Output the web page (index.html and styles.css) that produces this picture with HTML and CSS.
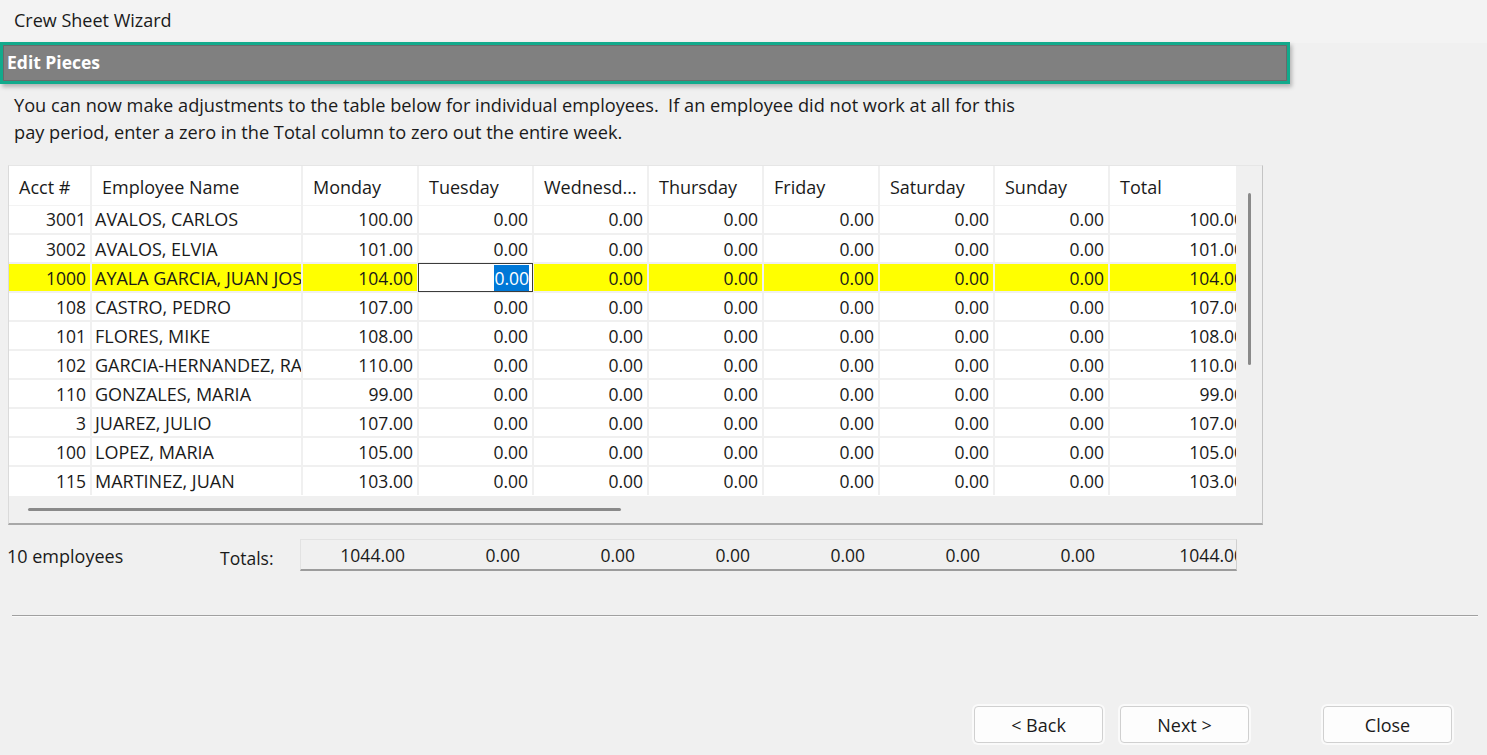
FILE: index.html
```html
<!DOCTYPE html>
<html lang="en">

<head>
    <meta charset="utf-8">
    <title>Crew Sheet Wizard</title>
    <meta name="viewport" content="width=device-width, initial-scale=1.0">
    <link rel="stylesheet" href="styles.css">
</head>

<body>
    <!-- Barre de titre -->
    <header class="barre-titre">Crew Sheet Wizard</header>

    <!-- Bandeau de l'étape -->
    <div class="bandeau">Edit Pieces</div>

    <p class="consigne">
        You can now make adjustments to the table below for individual employees.&nbsp; If an employee did not work at all for this<br>
        pay period, enter a zero in the Total column to zero out the entire week.
    </p>

    <!-- Grille des employés -->
    <section class="grille">
        <div class="zone-table">
            <table class="table-pieces">
                <colgroup>
                    <col class="col-acct">
                    <col class="col-nom">
                    <col class="col-lundi">
                    <col class="col-jour">
                    <col class="col-jour">
                    <col class="col-jour">
                    <col class="col-lundi">
                    <col class="col-jour">
                    <col class="col-jour">
                    <col class="col-total">
                </colgroup>
                <thead>
                    <tr>
                        <th>Acct #</th>
                        <th>Employee Name</th>
                        <th>Monday</th>
                        <th>Tuesday</th>
                        <th>Wednesd...</th>
                        <th>Thursday</th>
                        <th>Friday</th>
                        <th>Saturday</th>
                        <th>Sunday</th>
                        <th>Total</th>
                    </tr>
                </thead>
                <tbody>
                    <tr>
                        <td>3001</td><td class="nom">AVALOS, CARLOS</td>
                        <td>100.00</td><td>0.00</td><td>0.00</td><td>0.00</td><td>0.00</td><td>0.00</td><td>0.00</td><td>100.00</td>
                    </tr>
                    <tr>
                        <td>3002</td><td class="nom">AVALOS, ELVIA</td>
                        <td>101.00</td><td>0.00</td><td>0.00</td><td>0.00</td><td>0.00</td><td>0.00</td><td>0.00</td><td>101.00</td>
                    </tr>
                    <tr class="ligne-active">
                        <td>1000</td><td class="nom">AYALA GARCIA, JUAN JOSE</td>
                        <td>104.00</td>
                        <td class="cellule-edition"><span class="selection">0.00</span></td>
                        <td>0.00</td><td>0.00</td><td>0.00</td><td>0.00</td><td>0.00</td><td>104.00</td>
                    </tr>
                    <tr>
                        <td>108</td><td class="nom">CASTRO, PEDRO</td>
                        <td>107.00</td><td>0.00</td><td>0.00</td><td>0.00</td><td>0.00</td><td>0.00</td><td>0.00</td><td>107.00</td>
                    </tr>
                    <tr>
                        <td>101</td><td class="nom">FLORES, MIKE</td>
                        <td>108.00</td><td>0.00</td><td>0.00</td><td>0.00</td><td>0.00</td><td>0.00</td><td>0.00</td><td>108.00</td>
                    </tr>
                    <tr>
                        <td>102</td><td class="nom">GARCIA-HERNANDEZ, RAUL</td>
                        <td>110.00</td><td>0.00</td><td>0.00</td><td>0.00</td><td>0.00</td><td>0.00</td><td>0.00</td><td>110.00</td>
                    </tr>
                    <tr>
                        <td>110</td><td class="nom">GONZALES, MARIA</td>
                        <td>99.00</td><td>0.00</td><td>0.00</td><td>0.00</td><td>0.00</td><td>0.00</td><td>0.00</td><td>99.00</td>
                    </tr>
                    <tr>
                        <td>3</td><td class="nom">JUAREZ, JULIO</td>
                        <td>107.00</td><td>0.00</td><td>0.00</td><td>0.00</td><td>0.00</td><td>0.00</td><td>0.00</td><td>107.00</td>
                    </tr>
                    <tr>
                        <td>100</td><td class="nom">LOPEZ, MARIA</td>
                        <td>105.00</td><td>0.00</td><td>0.00</td><td>0.00</td><td>0.00</td><td>0.00</td><td>0.00</td><td>105.00</td>
                    </tr>
                    <tr>
                        <td>115</td><td class="nom">MARTINEZ, JUAN</td>
                        <td>103.00</td><td>0.00</td><td>0.00</td><td>0.00</td><td>0.00</td><td>0.00</td><td>0.00</td><td>103.00</td>
                    </tr>
                </tbody>
            </table>
        </div>

        <!-- Barres de défilement -->
        <div class="barre-verticale">
            <div class="curseur-vertical"></div>
        </div>
        <div class="barre-horizontale">
            <div class="curseur-horizontal"></div>
        </div>
        <div class="coin"></div>
    </section>

    <!-- Ligne des totaux -->
    <div class="ligne-totaux">
        <span class="nb-employes">10 employees</span>
        <span class="libelle-totaux">Totals:</span>
        <div class="boite-totaux">
            <span class="total-premier">1044.00</span>
            <span>0.00</span>
            <span>0.00</span>
            <span>0.00</span>
            <span>0.00</span>
            <span>0.00</span>
            <span>0.00</span>
            <span class="total-dernier">1044.00</span>
        </div>
    </div>

    <hr class="separateur">

    <!-- Boutons de navigation -->
    <footer class="boutons">
        <button class="bouton">&lt; Back</button>
        <button class="bouton">Next &gt;</button>
        <button class="bouton bouton-fermer">Close</button>
    </footer>
</body>

</html>
```

FILE: styles.css
```css
/* Normalisation
============================================================*/

* {
    margin: 0;
    padding: 0;
    box-sizing: border-box;
}

html {
    width: 100vw;
    height: 100vh;
    font-family: "Open Sans", "Noto Sans", sans-serif;
    font-size: 18px;
}

body {
    width: 100%;
    height: 100%;
    background-color: #f0f0f0;
    color: #1a1a1a;
    overflow: hidden;
}

/* Barre de titre
============================================================*/

.barre-titre {
    height: 43px;
    padding-left: 14px;
    background-color: #f3f3f3;
    font-size: 18px;
    line-height: 41px;
}

/* Bandeau Edit Pieces
============================================================*/

.bandeau {
    width: 1290px;
    height: 42px;
    margin-top: -1px;
    padding-left: 4px;
    border: 3px solid #12aa8c;
    background-color: #808080;
    box-shadow: inset 0 0 0 1px #6a6a6a, 2px 3px 4px rgba(0, 0, 0, 0.25);
    color: white;
    font-weight: bold;
    font-size: 17.5px;
    line-height: 34px;
}

.consigne {
    margin: 8px 0 0 14px;
    font-size: 18.2px;
    line-height: 27px;
}

/* Grille
============================================================*/

.grille {
    width: 1255px;
    height: 360px;
    margin: 19px 0 0 8px;
    border-top: 1px solid #e6e6e6;
    border-left: 1px solid #dadada;
    border-right: 1px solid #c4c4c4;
    border-bottom: 2px solid #a8a8a8;
    background-color: #f0f0f0;

    display: grid;
    grid-template-columns: 1227px 1fr;
    grid-template-rows: 330px 1fr;
}

.zone-table {
    overflow: hidden;
    background-color: white;
}

.table-pieces {
    width: 1240px;
    table-layout: fixed;
    border-collapse: collapse;
    font-size: 17.5px;
}

.col-acct { width: 82px; }
.col-nom { width: 211px; }
.col-lundi { width: 116px; }
.col-jour { width: 115px; }
.col-total { width: 140px; }

.table-pieces th {
    height: 39px;
    padding: 3px 0 0 10px;
    text-align: left;
    font-size: 18px;
    font-weight: normal;
    white-space: nowrap;
    overflow: hidden;
    border-right: 2px solid #f0f0f0;
    border-bottom: 1px solid #f3f3f3;
}

.table-pieces td {
    height: 29px;
    padding: 0 4px 0 2px;
    text-align: right;
    white-space: nowrap;
    overflow: hidden;
    border-right: 2px solid #f0f0f0;
    border-bottom: 2px solid #f0f0f0;
}

.table-pieces td.nom {
    padding: 0 3px 0 3px;
    text-align: left;
    text-overflow: clip;
    font-size: 18px;
}

.table-pieces tr:last-child td {
    border-bottom: none;
}

.ligne-active td {
    background-color: #ffff00;
}

.ligne-active td.cellule-edition {
    background-color: white;
    outline: 1px solid #3c3c3c;
    outline-offset: -1px;
    padding-right: 3px;
}

.selection {
    background-color: #0078d7;
    color: white;
    padding: 1px 0;
}

/* Barres de défilement */
.barre-verticale {
    display: flex;
    justify-content: center;
    padding: 27px 0 0 1px;
}

.curseur-vertical {
    width: 3px;
    height: 172px;
    border-radius: 2px;
    background-color: #8a8a8a;
}

.barre-horizontale {
    padding: 12px 0 0 19px;
}

.curseur-horizontal {
    width: 593px;
    height: 3px;
    border-radius: 2px;
    background-color: #8a8a8a;
}

/* Totaux
============================================================*/

.ligne-totaux {
    margin-top: 14px;
    display: flex;
    align-items: center;
}

.nb-employes {
    width: 220px;
    padding-left: 7px;
    margin-top: 2px;
}

.libelle-totaux {
    width: 80px;
    margin-top: 5px;
    font-size: 17.5px;
}

.boite-totaux {
    width: 937px;
    height: 32px;
    overflow: hidden;
    border-top: 1px solid #e2e2e2;
    border-left: 1px solid #e2e2e2;
    border-right: 1px solid #d0d0d0;
    border-bottom: 2px solid #9c9c9c;
    background-color: #f0f0f0;
    white-space: nowrap;
    font-size: 17.5px;

    display: flex;
    align-items: center;
}

.boite-totaux span {
    flex: 0 0 115px;
    padding-right: 5px;
    text-align: right;
}

.boite-totaux .total-premier {
    flex-basis: 109px;
}

.boite-totaux .total-dernier {
    flex-basis: 148px;
    padding-right: 4px;
}

/* Séparateur et boutons
============================================================*/

.separateur {
    width: 1466px;
    margin: 44px 0 0 12px;
    border: none;
    border-top: 1px solid #a0a0a0;
    border-bottom: 1px solid #fafafa;
}

.boutons {
    margin: 89px 35px 0 0;
    display: flex;
    justify-content: flex-end;
    gap: 17px;
}

.bouton {
    width: 129px;
    height: 37px;
    font-family: "Open Sans", "Noto Sans", sans-serif;
    font-size: 18px;
    color: #1a1a1a;
    background-color: #fdfdfd;
    border: 1px solid #d0d0d0;
    border-radius: 4px;
    box-shadow: 0 0 0 2px #fafafa;
}

.bouton-fermer {
    margin-left: 57px;
}
```
